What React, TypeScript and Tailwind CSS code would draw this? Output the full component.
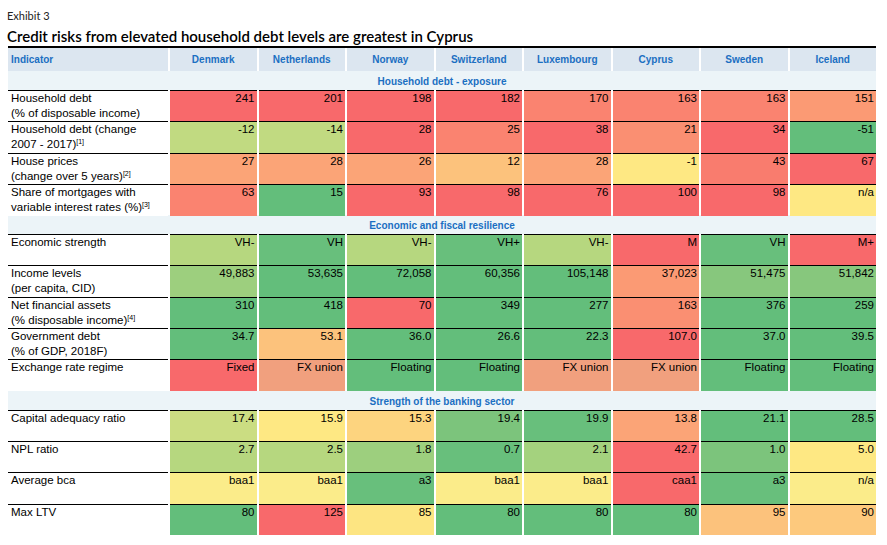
const C: Record<string, string> = {
  r: "bg-[#f8696b]",
  r1: "bg-[#f97c6e]",
  r2: "bg-[#fa8370]",
  r3: "bg-[#fa8f72]",
  r4: "bg-[#fb9a74]",
  o: "bg-[#fba477]",
  fx: "bg-[#f1a07e]",
  o2: "bg-[#fcc27c]",
  o3: "bg-[#fdc97d]",
  o4: "bg-[#fdd47f]",
  y: "bg-[#fee883]",
  y2: "bg-[#fde582]",
  yp: "bg-[#fbec8a]",
  yg1: "bg-[#cbdd82]",
  yg2: "bg-[#c1da81]",
  yg3: "bg-[#b6d77f]",
  yg4: "bg-[#a4d27e]",
  yg5: "bg-[#9dcf7e]",
  g3: "bg-[#87c77d]",
  g2: "bg-[#7cc47c]",
  g1: "bg-[#68bf7c]",
  g: "bg-[#63be7b]",
};

const countries = [
  "Denmark",
  "Netherlands",
  "Norway",
  "Switzerland",
  "Luxembourg",
  "Cyprus",
  "Sweden",
  "Iceland",
];

type Row = {
  label: string;
  label2?: string;
  note?: string;
  cells: [string, string][];
};

type Section = { title: string; rows: Row[] };

const sections: Section[] = [
  {
    title: "Household debt - exposure",
    rows: [
      {
        label: "Household debt",
        label2: "(% of disposable income)",
        cells: [["241", "r"], ["201", "r"], ["198", "r"], ["182", "r"], ["170", "r2"], ["163", "r2"], ["163", "r2"], ["151", "r4"]],
      },
      {
        label: "Household debt (change",
        label2: "2007 - 2017)",
        note: "[1]",
        cells: [["-12", "yg2"], ["-14", "yg2"], ["28", "r"], ["25", "r2"], ["38", "r"], ["21", "r3"], ["34", "r"], ["-51", "g"]],
      },
      {
        label: "House prices",
        label2: "(change over 5 years)",
        note: "[2]",
        cells: [["27", "o"], ["28", "o"], ["26", "o"], ["12", "o2"], ["28", "o"], ["-1", "y"], ["43", "r1"], ["67", "r"]],
      },
      {
        label: "Share of mortgages with",
        label2: "variable interest rates (%)",
        note: "[3]",
        cells: [["63", "r2"], ["15", "g"], ["93", "r"], ["98", "r"], ["76", "r"], ["100", "r"], ["98", "r"], ["n/a", "y"]],
      },
    ],
  },
  {
    title: "Economic and fiscal resilience",
    rows: [
      {
        label: "Economic strength",
        cells: [["VH-", "yg3"], ["VH", "g1"], ["VH-", "yg3"], ["VH+", "g1"], ["VH-", "yg3"], ["M", "r"], ["VH", "g1"], ["M+", "r"]],
      },
      {
        label: "Income levels",
        label2: "(per capita, CID)",
        cells: [["49,883", "yg5"], ["53,635", "g"], ["72,058", "g"], ["60,356", "g"], ["105,148", "g"], ["37,023", "r4"], ["51,475", "g3"], ["51,842", "g3"]],
      },
      {
        label: "Net financial assets",
        label2: "(% disposable income)",
        note: "[4]",
        cells: [["310", "g"], ["418", "g"], ["70", "r"], ["349", "g"], ["277", "g"], ["163", "r3"], ["376", "g"], ["259", "g"]],
      },
      {
        label: "Government debt",
        label2: "(% of GDP, 2018F)",
        cells: [["34.7", "g"], ["53.1", "o2"], ["36.0", "g"], ["26.6", "g"], ["22.3", "g"], ["107.0", "r"], ["37.0", "g"], ["39.5", "g"]],
      },
      {
        label: "Exchange rate regime",
        cells: [["Fixed", "r"], ["FX union", "fx"], ["Floating", "g"], ["Floating", "g"], ["FX union", "fx"], ["FX union", "fx"], ["Floating", "g"], ["Floating", "g"]],
      },
    ],
  },
  {
    title: "Strength of the banking sector",
    rows: [
      {
        label: "Capital adequacy ratio",
        cells: [["17.4", "yg1"], ["15.9", "y"], ["15.3", "o4"], ["19.4", "g2"], ["19.9", "g1"], ["13.8", "o"], ["21.1", "g"], ["28.5", "g"]],
      },
      {
        label: "NPL ratio",
        cells: [["2.7", "yg3"], ["2.5", "yg3"], ["1.8", "yg5"], ["0.7", "g1"], ["2.1", "yg4"], ["42.7", "r"], ["1.0", "g2"], ["5.0", "y"]],
      },
      {
        label: "Average bca",
        cells: [["baa1", "yp"], ["baa1", "yp"], ["a3", "g1"], ["baa1", "yp"], ["baa1", "yp"], ["caa1", "r"], ["a3", "g1"], ["n/a", "yp"]],
      },
      {
        label: "Max LTV",
        cells: [["80", "g"], ["125", "r"], ["85", "y2"], ["80", "g"], ["80", "g"], ["80", "g"], ["95", "o2"], ["90", "o3"]],
      },
    ],
  },
];

const grid = "grid grid-cols-[160px_repeat(8,minmax(0,1fr))] gap-x-[2px]";

function DataRow({ row }: { row: Row }) {
  return (
    <div className={`${grid} h-[31.3px]`}>
      <div className="border-t border-black bg-white pl-[3px] text-[11.5px] leading-[15px] text-black">
        <div>{row.label}</div>
        {row.label2 && (
          <div>
            {row.label2}
            {row.note && (
              <span className="relative -top-[4px] text-[7px]">{row.note}</span>
            )}
          </div>
        )}
      </div>
      {row.cells.map(([v, c], i) => (
        <div
          key={i}
          className={`border-t border-black ${C[c]} pr-[2px] text-right text-[11.5px] leading-[15px] text-black`}
        >
          {v}
        </div>
      ))}
    </div>
  );
}

export default function App() {
  return (
    <div className="w-[887px] h-[545px] bg-white font-['Liberation_Sans',Arial,sans-serif] overflow-hidden">
      <div className="pl-[7px] pt-[9px]">
        <div className="font-['Lato',sans-serif] text-[11px] leading-[14px] text-[#222]">
          Exhibit 3
        </div>
        <div className="mt-[4px] font-['Lato',sans-serif] font-semibold text-[15px] leading-[18px] text-black">
          Credit risks from elevated household debt levels are greatest in Cyprus
        </div>
      </div>
      <div className="ml-[8px] mt-[1px] w-[868px]">
        <div className="h-[2px] bg-black" />
        <div className={`${grid} h-[23px]`}>
          <div className="flex items-center bg-[#dce6f0] pl-[3px] text-[10px] font-bold text-[#1b6fc2]">
            Indicator
          </div>
          {countries.map((c) => (
            <div
              key={c}
              className="flex items-center justify-center bg-[#dce6f0] text-[10px] font-bold text-[#1b6fc2]"
            >
              {c}
            </div>
          ))}
        </div>
        {sections.map((s) => (
          <div key={s.title}>
            <div className="flex h-[19px] items-center justify-center bg-[#ecf4f8] pt-[2px] text-[10px] font-bold text-[#1b6fc2]">
              {s.title}
            </div>
            {s.rows.map((r) => (
              <DataRow key={r.label} row={r} />
            ))}
          </div>
        ))}
      </div>
    </div>
  );
}
